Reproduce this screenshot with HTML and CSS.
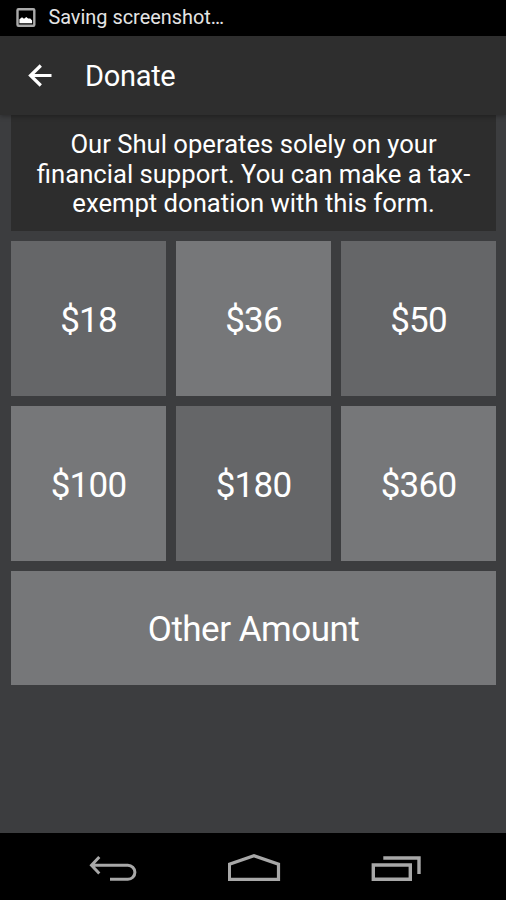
FILE: index.html
```html
<!DOCTYPE html>
<html lang="en">
<head>
  <meta charset="UTF-8">
  <meta name="viewport" content="width=device-width, initial-scale=1.0">
  <title>Donate</title>
  <link rel="stylesheet" href="styles.css">
</head>
<body>
  <!-- Status bar -->
  <div class="status-bar">
    <svg class="status-icon" width="20" height="20" viewBox="0 0 20 20">
      <rect x="1.5" y="2.2" width="16.8" height="16.6" rx="1" fill="none" stroke="#aaa" stroke-width="2.4"/>
      <path d="M3.4 16.2v-4l2.6-2 2 1.6 2.3-1.8 1.8 1.6h2.2l1.8 1.8v2.8z" fill="#fff"/>
    </svg>
    <span>Saving screenshot…</span>
  </div>

  <!-- App bar -->
  <header class="app-bar">
    <a href="#" class="back" aria-label="Back">
      <svg width="24" height="24" viewBox="0 0 24 24">
        <path d="M23.5 11.5H2.5M12.8 1.5L2.5 11.5l10.3 10" fill="none" stroke="#fff" stroke-width="3.2"/>
      </svg>
    </a>
    <h1>Donate</h1>
  </header>

  <main class="content">
    <p class="intro">Our Shul operates solely on your<br>financial support. You can make a tax-<br>exempt donation with this form.</p>
    <div class="amounts">
      <button class="tile dark">$18</button>
      <button class="tile">$36</button>
      <button class="tile dark">$50</button>
      <button class="tile">$100</button>
      <button class="tile dark">$180</button>
      <button class="tile">$360</button>
      <button class="tile other">Other Amount</button>
    </div>
  </main>

  <!-- Navigation bar -->
  <nav class="nav-bar">
    <svg width="50" height="30" viewBox="0 0 50 30">
      <path d="M11.3 3L3.5 11.3l7.8 8.2M3.5 11.3h36.4a7 7 0 0 1 0 14H22" fill="none" stroke="#a8a8a8" stroke-width="3"/>
    </svg>
    <svg width="54" height="30" viewBox="0 0 54 30">
      <path d="M1.4 25.3V10.2L26 1.8l24.5 8.4v15.1z" fill="none" stroke="#a8a8a8" stroke-width="3.2"/>
    </svg>
    <svg width="50" height="30" viewBox="0 0 50 30">
      <path d="M2.3 11h37v14.3h-37zM12.3 4h35.7v16" fill="none" stroke="#a8a8a8" stroke-width="3.4"/>
    </svg>
  </nav>
</body>
</html>
```

FILE: styles.css
```css
* {
    box-sizing: border-box;
}

body {
    display: flex;
    flex-direction: column;
    height: 900px;
    margin: 0;
    overflow: hidden;
    background-color: #3c3d3f;
    color: #fff;
    font-family: Roboto, "Liberation Sans", sans-serif;
}

/* Status bar */
.status-bar {
    display: flex;
    align-items: center;
    gap: 12.4px;
    height: 36px;
    padding: 0 16px 2px;
    background-color: #000;
    color: #e4e4e4;
    font-size: 19.9px;
}

/* App bar */
.app-bar {
    display: flex;
    align-items: center;
    height: 79px;
    padding-left: 28px;
    background-color: #2e2e2e;
    box-shadow: 0 1px 5px rgba(0, 0, 0, 0.35);
    z-index: 1;
}

.back {
    display: flex;
    width: 57px;
}

.app-bar h1 {
    margin: 0;
    font-size: 29px;
    font-weight: 400;
    letter-spacing: -0.3px;
}

/* Content */
.content {
    flex: 1;
    padding: 0 10.3px 0 11.4px;
}

.intro {
    height: 115.6px;
    margin: 0 0 10.7px;
    padding-top: 15px;
    background-color: #2d2d2d;
    font-size: 25.65px;
    line-height: 29.5px;
    text-align: center;
    white-space: nowrap;
}

.amounts {
    display: grid;
    grid-template-columns: repeat(3, 1fr);
    grid-template-rows: 154.3px 154.3px 113.4px;
    gap: 10.7px;
}

.tile {
    padding: 4px 0 0;
    border: none;
    background-color: #767779;
    color: #fff;
    font-family: inherit;
    font-size: 35px;
    letter-spacing: -0.75px;
}

.tile.dark {
    background-color: #656668;
}

.tile.other {
    grid-column: span 3;
    letter-spacing: -0.5px;
}

/* Navigation bar */
.nav-bar {
    display: flex;
    justify-content: space-between;
    height: 67px;
    padding: 21px 85px 0 88px;
    background-color: #000;
}
```
